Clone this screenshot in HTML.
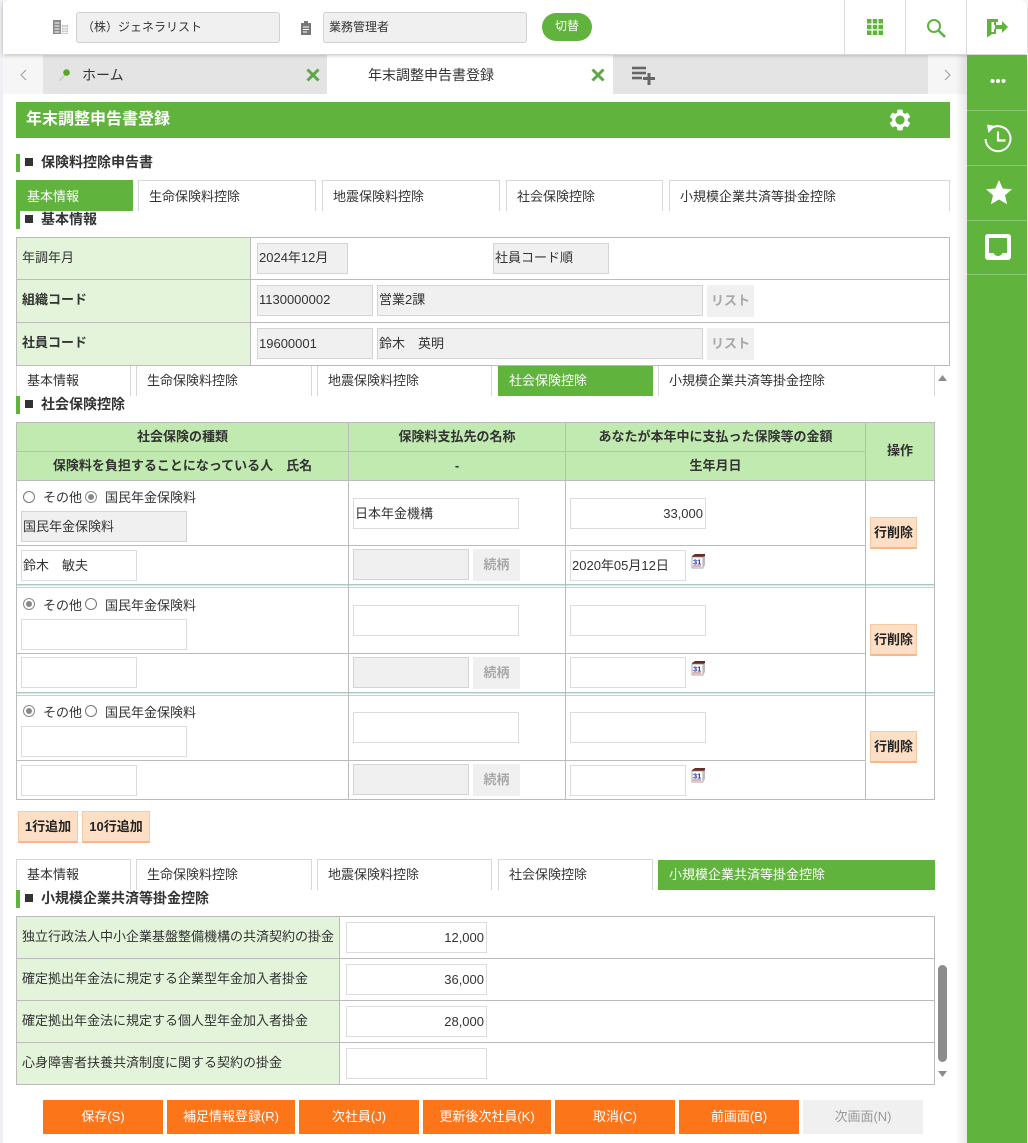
<!DOCTYPE html>
<html lang="ja"><head><meta charset="utf-8"><title>年末調整申告書登録</title>
<style>
html,body{margin:0;padding:0;width:1028px;height:1143px;overflow:hidden;background:#fff}
body{position:relative;font-family:"Liberation Sans","Noto Sans CJK JP",sans-serif;font-size:13px;color:#333}
div,svg{position:absolute;box-sizing:border-box}
.t{white-space:nowrap;line-height:20px;height:20px}
.c{text-align:center}
.b{font-weight:bold}
.i{border:1px solid #dcdcdc;background:#fff;height:31px;line-height:29px;padding:0 1px;white-space:nowrap;font-size:13px}
.g{background:#f0f0f0;border-color:#d4d4d4}
.r{text-align:right;padding-right:2px}
.gb{background:#f0f0f0;color:#a8a8a8;font-weight:bold;text-align:center;height:32px;line-height:31px;width:47px}
.del{background:#fddfc6;border:1px solid #f6c9a3;border-bottom:2px solid #f4b88a;color:#222;font-weight:bold;text-align:center;line-height:29px;height:32px;width:47px;white-space:nowrap}
.ob{background:#fd7519;color:#fff;text-align:center;top:1100px;height:34px;line-height:33px;white-space:nowrap}
.l{background:#bbb}
.tab{border:1px solid #d8d8d8;border-bottom:0}
.on{background:#60b33c;border:0;color:#fff}
.bar{left:16px;width:4px;height:18px;background:#60b33c}
.sq{left:25px;width:8px;height:8px;background:#333}
.rad{width:12px;height:12px;border:1px solid #777;border-radius:50%;background:#fff}
.rad.k::after{content:"";position:absolute;left:2px;top:2px;width:6px;height:6px;border-radius:50%;background:#888}
.rad.k{border-color:#8a8a8a}
.sep{left:967px;width:60px;height:1px;background:#8cc973}
</style></head><body>

<div style="left:0;top:0;width:3px;height:1143px;background:#eef0f3"></div>
<div style="left:1027px;top:0;width:1px;height:1143px;background:#fff"></div>

<!-- tab bar -->
<div style="left:3px;top:55px;width:40px;height:39px;background:#f6f6f6"></div>
<div style="left:43px;top:55px;width:284px;height:39px;background:#e4e4e4"></div>
<div style="left:613px;top:55px;width:315px;height:39px;background:#e4e4e4"></div>
<div style="left:928px;top:55px;width:39px;height:39px;background:#f6f6f6"></div>

<!-- header -->
<div style="left:3px;top:0;width:1024px;height:54px;background:#fff;box-shadow:0 1px 4px rgba(0,0,0,.28);border-radius:6px 6px 0 0"></div>
<svg style="left:52px;top:19px" width="17" height="16" viewBox="0 0 17 16"><rect x="1" y="1" width="8" height="14" fill="#8a8a8a"/><path d="M2.500 4h5M2.500 7h5M2.500 10h5M2.500 13h5" stroke="#fff" stroke-width="1"/><rect x="10" y="6" width="6" height="9" fill="#bcbcbc"/><path d="M12 6v9M14 6v9M10 8.500h6M10 11h6M10 13.500h6" stroke="#fff" stroke-width=".7"/></svg>
<div class="i g" style="left:76px;top:12px;width:204px;background:#f0f0f0;border-color:#d0d0d0;border-radius:3px;font-size:12px;padding-left:5px">（株）ジェネラリスト</div>
<svg style="left:299px;top:20px" width="14" height="15" viewBox="0 0 14 15"><path d="M2 3h3V1h4v2h3v12H2z" fill="#777"/><path d="M4 7h6M4 9.500h6M4 12h4" stroke="#fff" stroke-width="1"/></svg>
<div class="i g" style="left:323px;top:12px;width:204px;background:#f0f0f0;border-color:#d0d0d0;border-radius:3px;font-size:12px;padding-left:5px">業務管理者</div>
<div style="left:542px;top:13px;width:50px;height:28px;border-radius:14px;background:#60b33c;color:#fff;text-align:center;line-height:27px;font-size:12px">切替</div>
<div style="left:844px;top:0;width:1px;height:54px;background:#ddd"></div>
<div style="left:905px;top:0;width:1px;height:54px;background:#ddd"></div>
<div style="left:966px;top:0;width:1px;height:54px;background:#ddd"></div>
<svg style="left:867px;top:19px" width="16" height="16" viewBox="0 0 16 16" fill="#60b33c"><rect width="4.500" height="4.500"/><rect x="5.750" width="4.500" height="4.500"/><rect x="11.500" width="4.500" height="4.500"/><rect y="5.750" width="4.500" height="4.500"/><rect x="5.750" y="5.750" width="4.500" height="4.500"/><rect x="11.500" y="5.750" width="4.500" height="4.500"/><rect y="11.500" width="4.500" height="4.500"/><rect x="5.750" y="11.500" width="4.500" height="4.500"/><rect x="11.500" y="11.500" width="4.500" height="4.500"/></svg>
<svg style="left:926px;top:18px" width="20" height="20" viewBox="0 0 20 20"><circle cx="8" cy="8" r="6" fill="none" stroke="#60b33c" stroke-width="2"/><path d="M12.500 12.500L19 19" stroke="#60b33c" stroke-width="2.600"/></svg>
<svg style="left:986px;top:18px" width="23" height="20" viewBox="0 0 23 20" fill="#60b33c"><path d="M1 1h11v3H5.500v12.500L1 19.500z"/><rect x="8" y="4" width="2" height="3"/><rect x="8" y="11" width="2" height="5"/><rect x="5" y="14" width="5" height="2"/><path d="M9 7h7V3l6 6-6 6v-4H9z"/></svg>

<!-- tab contents -->
<svg style="left:20px;top:69px" width="7" height="12" viewBox="0 0 7 12"><path d="M6 1L1 6l5 5" fill="none" stroke="#999" stroke-width="1"/></svg>
<svg style="left:57px;top:67px" width="16" height="16" viewBox="0 0 16 16"><path d="M8 8L2 14" stroke="#ccc" stroke-width="1.300"/><circle cx="9.500" cy="5.500" r="3.300" fill="#5ea32c"/></svg>
<div class="t" style="left:82px;top:65px;font-size:14px">ホーム</div>
<svg style="left:306px;top:68px" width="14" height="14" viewBox="0 0 14 14"><path d="M1.500 1.500l11 11M12.500 1.500l-11 11" stroke="#5fa64a" stroke-width="3"/></svg>
<div class="t" style="left:368px;top:65px;font-size:14px">年末調整申告書登録</div>
<svg style="left:591px;top:68px" width="14" height="14" viewBox="0 0 14 14"><path d="M1.500 1.500l11 11M12.500 1.500l-11 11" stroke="#5fa64a" stroke-width="3"/></svg>
<svg style="left:632px;top:66px" width="24" height="19" viewBox="0 0 24 19" fill="#666"><rect y=".7" width="14" height="2.600"/><rect y="5.700" width="14" height="2.600"/><rect y="10.700" width="10" height="2.600"/><rect x="11" y="11" width="12" height="3"/><rect x="15.500" y="7" width="3" height="12"/></svg>
<svg style="left:944px;top:69px" width="7" height="12" viewBox="0 0 7 12"><path d="M1 1l5 5-5 5" fill="none" stroke="#999" stroke-width="1"/></svg>

<!-- sidebar -->
<div style="left:955px;top:55px;width:12px;height:1088px;background:linear-gradient(to right,rgba(0,0,0,0),rgba(0,0,0,.09))"></div>
<div style="left:967px;top:55px;width:60px;height:1088px;background:#60b33c"></div>
<div class="sep" style="top:110px"></div><div class="sep" style="top:165px"></div><div class="sep" style="top:220px"></div><div class="sep" style="top:274px"></div>
<svg style="left:989px;top:77px" width="18" height="8" viewBox="0 0 18 8" fill="#fff"><circle cx="3.500" cy="4" r="2"/><circle cx="9" cy="4" r="2"/><circle cx="14.500" cy="4" r="2"/></svg>
<svg style="left:983px;top:122px" width="30" height="32" viewBox="0 0 30 32"><path d="M6.500 7.500A12.500 12.500 0 1 1 2.500 17" fill="none" stroke="#fff" stroke-width="2"/><path d="M4 2.500l8 1.500-6.500 7z" fill="#fff"/><path d="M15 9.500v9h7.500" fill="none" stroke="#fff" stroke-width="2.200"/></svg>
<svg style="left:985px;top:179px" width="28" height="26" viewBox="0 0 28 26"><path d="M14 1l3.700 8.500 9.300.8-7 6 2.100 9L14 20.500l-8.100 4.800 2.100-9-7-6 9.300-.8z" fill="#fff"/></svg>
<svg style="left:985px;top:234px" width="26" height="26" viewBox="0 0 26 26"><path fill-rule="evenodd" d="M3 0h20a3 3 0 0 1 3 3v20a3 3 0 0 1-3 3H3a3 3 0 0 1-3-3V3a3 3 0 0 1 3-3zM4 4v15h4.500c1 2 2.500 3 4.500 3s3.500-1 4.500-3H22V4z" fill="#fff"/></svg>

<!-- title -->
<div style="left:16px;top:102px;width:934px;height:36px;background:#60b33c"></div>
<div class="t b" style="left:26px;top:110px;font-size:16px;color:#fff">年末調整申告書登録</div>
<svg style="left:887px;top:107px" width="26" height="26" viewBox="0 0 24 24"><path fill="#fff" d="M19.140 12.940c.04-.3.06-.61.06-.94 0-.32-.02-.64-.07-.94l2.030-1.580c.18-.14.23-.41.12-.61l-1.920-3.320c-.12-.22-.37-.29-.59-.22l-2.390.96c-.5-.38-1.030-.7-1.620-.94l-.36-2.540c-.04-.24-.24-.41-.48-.41h-3.840c-.24 0-.43.17-.47.41l-.36 2.540c-.59.24-1.130.57-1.620.94l-2.390-.96c-.22-.08-.47 0-.59.22L2.740 8.870c-.12.21-.08.47.12.61l2.030 1.580c-.05.3-.09.63-.09.94s.02.64.07.94l-2.030 1.580c-.18.14-.23.41-.12.61l1.920 3.320c.12.22.37.29.59.22l2.390-.96c.5.38 1.030.7 1.620.94l.36 2.540c.05.24.24.41.48.41h3.840c.24 0 .44-.17.47-.41l.36-2.540c.59-.24 1.130-.56 1.620-.94l2.390.96c.22.08.47 0 .59-.22l1.920-3.320c.12-.22.07-.47-.12-.61l-2.010-1.580zM12 16.200c-2.310 0-4.200-1.890-4.200-4.200s1.890-4.200 4.200-4.200 4.200 1.890 4.200 4.200-1.890 4.200-4.200 4.200z"/></svg>

<!-- section 1 -->
<div class="bar" style="top:154px"></div><div class="sq" style="top:158px"></div>
<div class="t b" style="left:41px;top:152px;font-size:14px">保険料控除申告書</div>
<div class="tab on" style="left:16px;top:180px;width:117px;height:31px"></div>
<div class="tab" style="left:138px;top:180px;width:178px;height:31px"></div>
<div class="tab" style="left:322px;top:180px;width:178px;height:31px"></div>
<div class="tab" style="left:506px;top:180px;width:157px;height:31px"></div>
<div class="tab" style="left:669px;top:180px;width:281px;height:31px"></div>
<div class="t" style="left:27px;top:187px;color:#fff">基本情報</div>
<div class="t" style="left:149px;top:187px">生命保険料控除</div>
<div class="t" style="left:333px;top:187px">地震保険料控除</div>
<div class="t" style="left:517px;top:187px">社会保険控除</div>
<div class="t" style="left:680px;top:187px">小規模企業共済等掛金控除</div>

<div class="bar" style="top:211px"></div><div class="sq" style="top:215px"></div>
<div class="t b" style="left:41px;top:209px;font-size:14px">基本情報</div>

<!-- table 1 -->
<div style="left:16px;top:237px;width:234px;height:128px;background:#e3f4db"></div>
<div class="l" style="left:16px;top:237px;width:934px;height:1px"></div>
<div class="l" style="left:16px;top:279px;width:934px;height:1px"></div>
<div class="l" style="left:16px;top:322px;width:934px;height:1px"></div>
<div class="l" style="left:16px;top:365px;width:934px;height:1px"></div>
<div class="l" style="left:16px;top:237px;width:1px;height:129px"></div>
<div class="l" style="left:250px;top:237px;width:1px;height:129px"></div>
<div class="l" style="left:949px;top:237px;width:1px;height:129px"></div>
<div class="t" style="left:22px;top:248px">年調年月</div>
<div class="t b" style="left:22px;top:290px">組織コード</div>
<div class="t b" style="left:22px;top:333px">社員コード</div>
<div class="i g" style="left:257px;top:243px;width:91px;line-height:27px">2024年12月</div>
<div class="i g" style="left:493px;top:243px;width:116px;line-height:27px">社員コード順</div>
<div class="i g" style="left:257px;top:285px;width:116px;line-height:27px">1130000002</div>
<div class="i g" style="left:377px;top:285px;width:326px;line-height:27px">営業2課</div>
<div class="gb" style="left:707px;top:285px">リスト</div>
<div class="i g" style="left:257px;top:328px;width:116px">19600001</div>
<div class="i g" style="left:377px;top:328px;width:326px">鈴木　英明</div>
<div class="gb" style="left:707px;top:328px">リスト</div>

<!-- tabs 2 -->
<div class="tab" style="left:16px;top:366px;width:115px;height:30px;border-top:0"></div>
<div class="tab" style="left:136px;top:366px;width:176px;height:30px;border-top:0"></div>
<div class="tab" style="left:317px;top:366px;width:175px;height:30px;border-top:0"></div>
<div class="on" style="left:498px;top:366px;width:155px;height:30px"></div>
<div class="tab" style="left:658px;top:366px;width:277px;height:30px;border-top:0"></div>
<div class="t" style="left:27px;top:371px">基本情報</div>
<div class="t" style="left:147px;top:371px">生命保険料控除</div>
<div class="t" style="left:328px;top:371px">地震保険料控除</div>
<div class="t" style="left:509px;top:371px;color:#fff">社会保険控除</div>
<div class="t" style="left:669px;top:371px">小規模企業共済等掛金控除</div>

<div class="bar" style="top:396px"></div><div class="sq" style="top:400px"></div>
<div class="t b" style="left:41px;top:394px;font-size:14px">社会保険控除</div>

<!-- table 2 -->
<div style="left:16px;top:422px;width:919px;height:59px;background:#c1eab0"></div>
<div class="l" style="left:16px;top:422px;width:919px;height:1px"></div>
<div class="l" style="left:16px;top:451px;width:850px;height:1px"></div>
<div class="l" style="left:16px;top:480px;width:919px;height:1px"></div>
<div class="l" style="left:16px;top:545px;width:850px;height:1px"></div>
<div style="left:16px;top:584px;width:919px;height:1px;background:#a9c9c6"></div>
<div style="left:16px;top:585px;width:919px;height:1px;background:#d7e8e6"></div>
<div style="left:16px;top:587px;width:919px;height:1px;background:#bcd8d5"></div>
<div class="l" style="left:16px;top:653px;width:850px;height:1px"></div>
<div style="left:16px;top:692px;width:919px;height:1px;background:#a9c9c6"></div>
<div style="left:16px;top:693px;width:919px;height:1px;background:#d7e8e6"></div>
<div style="left:16px;top:695px;width:919px;height:1px;background:#bcd8d5"></div>
<div class="l" style="left:16px;top:760px;width:850px;height:1px"></div>
<div class="l" style="left:16px;top:799px;width:919px;height:1px"></div>
<div class="l" style="left:16px;top:422px;width:1px;height:378px"></div>
<div class="l" style="left:348px;top:422px;width:1px;height:378px"></div>
<div class="l" style="left:565px;top:422px;width:1px;height:378px"></div>
<div class="l" style="left:865px;top:422px;width:1px;height:378px"></div>
<div class="l" style="left:934px;top:422px;width:1px;height:378px"></div>

<div class="t b c" style="left:17px;top:427px;width:331px">社会保険の種類</div>
<div class="t b c" style="left:349px;top:427px;width:216px">保険料支払先の名称</div>
<div class="t b c" style="left:566px;top:427px;width:299px">あなたが本年中に支払った保険等の金額</div>
<div class="t b c" style="left:866px;top:441px;width:68px">操作</div>
<div class="t b c" style="left:17px;top:456px;width:331px">保険料を負担することになっている人　氏名</div>
<div class="t b c" style="left:349px;top:456px;width:216px">-</div>
<div class="t b c" style="left:566px;top:456px;width:299px">生年月日</div>

<!-- row 1 -->
<div class="rad" style="left:23px;top:491px"></div>
<div class="t" style="left:43px;top:488px">その他</div>
<div class="rad k" style="left:85px;top:491px"></div>
<div class="t" style="left:105px;top:488px">国民年金保険料</div>
<div class="i g" style="left:21px;top:511px;width:166px">国民年金保険料</div>
<div class="i" style="left:21px;top:550px;width:116px">鈴木　敏夫</div>
<div class="i" style="left:353px;top:498px;width:166px">日本年金機構</div>
<div class="i g" style="left:353px;top:549px;width:116px"></div>
<div class="gb" style="left:473px;top:549px">続柄</div>
<div class="i r" style="left:570px;top:498px;width:136px">33,000</div>
<div class="i" style="left:570px;top:550px;width:116px">2020年05月12日</div>
<svg style="left:691px;top:553px" width="15" height="16" viewBox="0 0 15 16"><path d="M1 3l3-2h10v3l-1 1H1z" fill="#6b2b22"/><path d="M1 4h11v11H1z" fill="#fff" stroke="#888" stroke-width=".7"/><path d="M12 4l2-1v9l-2 3z" fill="#bbb"/><text x="2" y="11.500" font-size="7.500" font-weight="bold" fill="#1a2aa8" font-family="Liberation Sans,sans-serif">31</text><path d="M2 13h8" stroke="#c33" stroke-width=".8"/></svg>
<div class="del" style="left:870px;top:517px">行削除</div>

<!-- row 2 -->
<div class="rad k" style="left:23px;top:598px"></div>
<div class="t" style="left:43px;top:596px">その他</div>
<div class="rad" style="left:85px;top:598px"></div>
<div class="t" style="left:105px;top:596px">国民年金保険料</div>
<div class="i" style="left:21px;top:619px;width:166px"></div>
<div class="i" style="left:21px;top:657px;width:116px"></div>
<div class="i" style="left:353px;top:605px;width:166px"></div>
<div class="i g" style="left:353px;top:657px;width:116px"></div>
<div class="gb" style="left:473px;top:657px">続柄</div>
<div class="i" style="left:570px;top:605px;width:136px"></div>
<div class="i" style="left:570px;top:657px;width:116px"></div>
<svg style="left:691px;top:660px" width="15" height="16" viewBox="0 0 15 16"><path d="M1 3l3-2h10v3l-1 1H1z" fill="#6b2b22"/><path d="M1 4h11v11H1z" fill="#fff" stroke="#888" stroke-width=".7"/><path d="M12 4l2-1v9l-2 3z" fill="#bbb"/><text x="2" y="11.500" font-size="7.500" font-weight="bold" fill="#1a2aa8" font-family="Liberation Sans,sans-serif">31</text><path d="M2 13h8" stroke="#c33" stroke-width=".8"/></svg>
<div class="del" style="left:870px;top:624px">行削除</div>

<!-- row 3 -->
<div class="rad k" style="left:23px;top:705px"></div>
<div class="t" style="left:43px;top:703px">その他</div>
<div class="rad" style="left:85px;top:705px"></div>
<div class="t" style="left:105px;top:703px">国民年金保険料</div>
<div class="i" style="left:21px;top:726px;width:166px"></div>
<div class="i" style="left:21px;top:765px;width:116px"></div>
<div class="i" style="left:353px;top:712px;width:166px"></div>
<div class="i g" style="left:353px;top:764px;width:116px"></div>
<div class="gb" style="left:473px;top:764px">続柄</div>
<div class="i" style="left:570px;top:712px;width:136px"></div>
<div class="i" style="left:570px;top:765px;width:116px"></div>
<svg style="left:691px;top:767px" width="15" height="16" viewBox="0 0 15 16"><path d="M1 3l3-2h10v3l-1 1H1z" fill="#6b2b22"/><path d="M1 4h11v11H1z" fill="#fff" stroke="#888" stroke-width=".7"/><path d="M12 4l2-1v9l-2 3z" fill="#bbb"/><text x="2" y="11.500" font-size="7.500" font-weight="bold" fill="#1a2aa8" font-family="Liberation Sans,sans-serif">31</text><path d="M2 13h8" stroke="#c33" stroke-width=".8"/></svg>
<div class="del" style="left:870px;top:731px">行削除</div>

<div class="del" style="left:18px;top:811px;width:60px">1行追加</div>
<div class="del" style="left:82px;top:811px;width:68px">10行追加</div>

<!-- tabs 3 -->
<div class="tab" style="left:16px;top:859px;width:115px;height:31px"></div>
<div class="tab" style="left:136px;top:859px;width:176px;height:31px"></div>
<div class="tab" style="left:317px;top:859px;width:175px;height:31px"></div>
<div class="tab" style="left:498px;top:859px;width:155px;height:31px"></div>
<div class="on" style="left:658px;top:860px;width:277px;height:30px"></div>
<div class="t" style="left:27px;top:865px">基本情報</div>
<div class="t" style="left:147px;top:865px">生命保険料控除</div>
<div class="t" style="left:328px;top:865px">地震保険料控除</div>
<div class="t" style="left:509px;top:865px">社会保険控除</div>
<div class="t" style="left:669px;top:865px;color:#fff">小規模企業共済等掛金控除</div>

<div class="bar" style="top:890px"></div><div class="sq" style="top:894px"></div>
<div class="t b" style="left:41px;top:888px;font-size:14px">小規模企業共済等掛金控除</div>

<!-- table 3 -->
<div style="left:16px;top:916px;width:323px;height:168px;background:#e3f4db"></div>
<div class="l" style="left:16px;top:916px;width:919px;height:1px"></div>
<div class="l" style="left:16px;top:958px;width:919px;height:1px"></div>
<div class="l" style="left:16px;top:1000px;width:919px;height:1px"></div>
<div class="l" style="left:16px;top:1042px;width:919px;height:1px"></div>
<div class="l" style="left:16px;top:1084px;width:919px;height:1px"></div>
<div class="l" style="left:16px;top:916px;width:1px;height:169px"></div>
<div class="l" style="left:339px;top:916px;width:1px;height:169px"></div>
<div class="l" style="left:934px;top:916px;width:1px;height:169px"></div>
<div class="t" style="left:22px;top:927px">独立行政法人中小企業基盤整備機構の共済契約の掛金</div>
<div class="t" style="left:22px;top:969px">確定拠出年金法に規定する企業型年金加入者掛金</div>
<div class="t" style="left:22px;top:1011px">確定拠出年金法に規定する個人型年金加入者掛金</div>
<div class="t" style="left:22px;top:1053px">心身障害者扶養共済制度に関する契約の掛金</div>
<div class="i r" style="left:346px;top:922px;width:141px">12,000</div>
<div class="i r" style="left:346px;top:964px;width:141px">36,000</div>
<div class="i r" style="left:346px;top:1006px;width:141px">28,000</div>
<div class="i r" style="left:346px;top:1048px;width:141px"></div>

<!-- bottom buttons -->
<div class="ob" style="left:43px;width:120px">保存(S)</div>
<div class="ob" style="left:167px;width:128px">補足情報登録(R)</div>
<div class="ob" style="left:299px;width:120px">次社員(J)</div>
<div class="ob" style="left:423px;width:128px">更新後次社員(K)</div>
<div class="ob" style="left:555px;width:120px">取消(C)</div>
<div class="ob" style="left:679px;width:120px">前画面(B)</div>
<div class="ob" style="left:803px;width:120px;background:#f0f0f0;color:#999">次画面(N)</div>

<!-- scrollbar -->
<svg style="left:937px;top:374px" width="11" height="8" viewBox="0 0 11 8"><path d="M5.500 1l4.500 6H1z" fill="#8c8c8c"/></svg>
<div style="left:938px;top:965px;width:9px;height:97px;background:#8c8c8c;border-radius:4.500px"></div>
<svg style="left:937px;top:1070px" width="11" height="8" viewBox="0 0 11 8"><path d="M1 1h9L5.500 7z" fill="#8c8c8c"/></svg>

</body></html>
